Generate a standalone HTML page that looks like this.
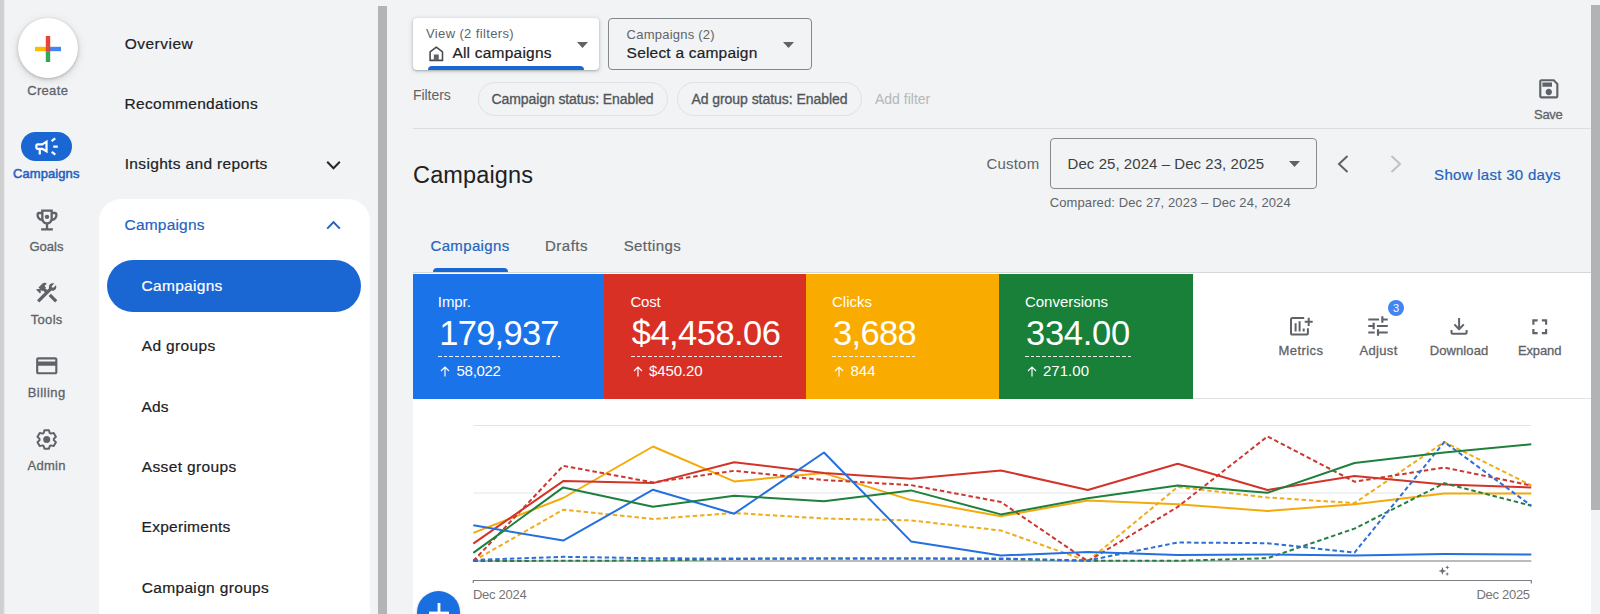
<!DOCTYPE html>
<html lang="en"><head><meta charset="utf-8"><title>Campaigns</title>
<style>
*{box-sizing:border-box}
html,body{margin:0;padding:0}
body{width:1600px;height:614px;overflow:hidden;position:relative;background:#f1f3f4;font-family:"Liberation Sans",sans-serif;color:#202124}
.t{position:absolute;white-space:pre;line-height:20px;height:20px}
.a{position:absolute}
.edge{left:0;top:0;width:6px;height:614px;background:linear-gradient(90deg,#cfd0cf 0,#cfd0cf 3.300px,#e4e6e7 4.300px,#f1f3f4 5.500px)}
.create{left:17.5px;top:18px;width:60px;height:60px;border-radius:50%;background:#fff;box-shadow:0 1px 3px rgba(60,64,67,.3),0 2px 8px rgba(60,64,67,.18)}
.pill{left:20.8px;top:131.500px;width:51.200px;height:29.500px;border-radius:15px;background:#1a66d3}
.navcard{left:99px;top:199px;width:271px;height:440px;border-radius:22px;background:#fff}
.navsel{left:107px;top:259.5px;width:254px;height:52px;border-radius:26px;background:#1a66d3}
.sb1{left:378.200px;top:5.500px;width:8.700px;height:620px;background:#b3b4b6}
.sb2t{left:1591.300px;top:0;width:9px;height:614px;background:#f1f3f4}
.sb2{left:1591.300px;top:5.400px;width:9px;height:504.600px;background:#b2b3b5}
.viewbox{left:412.900px;top:17.700px;width:186.300px;height:52.300px;border-radius:4px;background:#fff;box-shadow:0 1px 2px rgba(60,64,67,.3),0 1px 4px 1px rgba(60,64,67,.15);overflow:hidden}
.viewbar{left:15.5px;bottom:0;width:156px;height:4px;border-radius:4px 4px 0 0;background:#1a66d3}
.campbox{left:608px;top:18px;width:203.500px;height:52px;border-radius:4px;border:1px solid #84888d}
.chip{top:82px;height:34px;border-radius:17px;border:1.400px solid #dfe1e4}
.hr{left:413px;top:128px;width:1178px;height:1px;background:#dcdee1}
.datebox{left:1049.5px;top:138px;width:267.5px;height:51.200px;border-radius:4px;border:1px solid #878b90}
.tabline{left:413px;top:272px;width:1178px;height:1px;background:#d5d7da}
.tabsel{left:432.5px;top:268.300px;width:75px;height:4px;border-radius:4px 4px 0 0;background:#1a66d3}
.panel{left:413px;top:273px;width:1178px;height:345px;background:#fff}
.card{top:273.5px;height:125px}
.panelline{left:1193px;top:398px;width:398px;height:1px;background:#e2e3e5}
.dash{height:1px;top:355.500px;opacity:.9;background:repeating-linear-gradient(90deg,#fff 0 3.600px,transparent 3.600px 5.700px)}
.fab{left:417.300px;top:591px;width:43px;height:43px;border-radius:50%;background:#1a6fe0;box-shadow:0 1px 3px rgba(60,64,67,.35)}
.badge{left:1387.900px;top:299.800px;width:16.400px;height:16.400px;border-radius:50%;background:#4285f4}
svg{position:absolute;overflow:visible}

</style></head>
<body>
<div class="a edge"></div>
<div class="a create"></div>
<svg style="left:34.5px;top:35.5px" width="26" height="26" viewBox="0 0 26 26">
<rect x="10.8" y="0" width="4.4" height="13" fill="#ea4335"/>
<rect x="10.8" y="13" width="4.4" height="13" fill="#34a853"/>
<rect x="0" y="10.8" width="13" height="4.4" fill="#fbbc04"/>
<rect x="13" y="10.8" width="13" height="4.4" fill="#4285f4"/>
<rect x="10.8" y="10.8" width="4.4" height="4.4" fill="#ea4335"/>
</svg>
<div class="a pill"></div>
<svg style="left:33.4px;top:132.7px" width="27" height="27" viewBox="0 0 24 24" fill="#fff"><path d="M18 11v2h4v-2h-4zm-2 6.61c.96.71 2.21 1.65 3.2 2.39.4-.53.8-1.07 1.2-1.6-.99-.74-2.24-1.68-3.2-2.4-.4.54-.8 1.08-1.2 1.61zM20.4 5.6c-.4-.53-.8-1.07-1.2-1.6-.99.74-2.24 1.68-3.2 2.4.4.53.8 1.07 1.2 1.6.96-.72 2.21-1.65 3.2-2.4zM4 9c-1.1 0-2 .9-2 2v2c0 1.1.9 2 2 2h1v4h2v-4h1l5 3V6L8 9H4zm5.03 1.71L11 9.53v4.94l-1.97-1.18-.48-.29H4v-2h4.55l.48-.29z"/></svg>
<!-- goals -->
<svg style="left:33px;top:206.2px" width="28" height="28" viewBox="0 0 24 24" fill="#5f6368"><path d="M19 5h-2V3H7v2H5c-1.1 0-2 .9-2 2v1c0 2.55 1.92 4.63 4.39 4.940.63 1.5 1.98 2.63 3.61 2.96V19H7v2h10v-2h-4v-3.1c1.63-.33 2.98-1.46 3.61-2.96C19.08 12.63 21 10.55 21 8V7c0-1.1-.9-2-2-2zM5 8V7h2v3.82C5.84 10.4 5 9.3 5 8zm7 6c-1.65 0-3-1.35-3-3V5h6v6c0 1.65-1.35 3-3 3zm7-6c0 1.3-.84 2.4-2 2.82V7h2v1z"/><circle cx="12" cy="9.3" r="1.9"/></svg>
<!-- tools -->
<svg style="left:34.050px;top:280.250px" width="25.500" height="25.500" viewBox="0 0 24 24" fill="#5f6368"><path d="M13.78 15.17l2.12-2.12 6 6-2.12 2.120zM17.5 10c1.93 0 3.5-1.57 3.5-3.5 0-.58-.16-1.12-.41-1.6l-2.7 2.7-1.49-1.49 2.7-2.7c-.48-.25-1.02-.41-1.6-.41C15.57 3 14 4.57 14 6.5c0 .41.08.8.21 1.160l-1.85 1.85-1.78-1.78.71-.71-1.410-1.410L12 3.490c-1.170-1.170-3.070-1.170-4.240 0L4.220 7.030l1.410 1.410H2.810l-.71.71 3.540 3.540.71-.71V9.150l1.410 1.410.71-.71 1.780 1.780-7.410 7.410 2.120 2.120L16.340 9.790c.360.130.750.210 1.160.210z"/></svg>
<!-- billing -->
<svg style="left:33.850px;top:353.450px" width="25.500" height="25.500" viewBox="0 0 24 24" fill="#5f6368"><path d="M20 4H4c-1.110 0-1.990.89-1.990 2L2 18c0 1.110.89 2 2 2h16c1.110 0 2-.89 2-2V6c0-1.110-.89-2-2-2zm0 14H4v-6h16v6zm0-10H4V6h16v2z"/></svg>
<!-- admin -->
<svg style="left:0;top:0" width="100" height="614" viewBox="0 0 100 614"><path d="M49.74 432.97 L48.94 430.17 L44.46 430.17 L43.66 432.97 L42.57 433.60 L39.74 432.89 L37.50 436.77 L39.53 438.87 L39.53 440.13 L37.50 442.23 L39.74 446.11 L42.57 445.40 L43.66 446.03 L44.46 448.83 L48.94 448.83 L49.74 446.03 L50.83 445.40 L53.66 446.11 L55.90 442.23 L53.87 440.13 L53.87 438.87 L55.90 436.77 L53.66 432.89 L50.83 433.60 Z" fill="none" stroke="#5f6368" stroke-width="2" stroke-linejoin="round"/><circle cx="46.7" cy="439.5" r="3.500" fill="#5f6368"/></svg>
<!-- nav -->
<div class="a navcard"></div>
<div class="a navsel"></div>
<svg style="left:325.700px;top:157.700px" width="15" height="15" viewBox="0 0 15 15" fill="none" stroke="#26282b" stroke-width="2"><path d="M1.2 3.8 L7.5 10.3 L13.8 3.8"/></svg>
<svg style="left:325.700px;top:217.700px" width="15" height="15" viewBox="0 0 15 15" fill="none" stroke="#2560bd" stroke-width="2"><path d="M1.200 10.6 L7.5 4.1 L13.800 10.6"/></svg>
<div class="a sb1"></div>
<!-- top -->
<div class="a viewbox"><div class="a viewbar"></div></div>
<svg style="left:429.200px;top:45.600px" width="14.600" height="15.300" viewBox="0 0 16 15.5" preserveAspectRatio="none" fill="none" stroke="#45494d" stroke-width="1.700" stroke-linejoin="round"><path d="M1.2 14.600 V6 L8 1.100 L14.800 6 V14.600 Z"/><rect x="5.300" y="8.600" width="5.400" height="6" fill="#5f6368" stroke="none"/></svg>
<svg style="left:577px;top:41.500px" width="11" height="6" viewBox="0 0 11 6"><path d="M0 0 H11 L5.500 6 Z" fill="#5f6368"/></svg>
<div class="a campbox"></div>
<svg style="left:783px;top:42px" width="11" height="6" viewBox="0 0 11 6"><path d="M0 0 H11 L5.500 6 Z" fill="#5f6368"/></svg>
<div class="a chip" style="left:478px;width:190px"></div>
<div class="a chip" style="left:677px;width:184.500px"></div>
<div class="a hr"></div>
<svg style="left:1535.600px;top:75.600px" width="25.600" height="25.600" viewBox="0 0 24 24" fill="#5f6368"><path d="M17 3H5c-1.110 0-2 .9-2 2v14c0 1.100.89 2 2 2h14c1.100 0 2-.9 2-2V7l-4-4zm2 16H5V5h11.170L19 7.830V19zm-7-7c-1.660 0-3 1.340-3 3s1.340 3 3 3 3-1.340 3-3-1.340-3-3-3zM6 6h9v4H6z"/></svg>
<div class="a datebox"></div>
<svg style="left:1289px;top:161.200px" width="11" height="6" viewBox="0 0 11 6"><path d="M0 0 H11 L5.500 6 Z" fill="#5f6368"/></svg>
<svg style="left:1337px;top:155px" width="12" height="18" viewBox="0 0 12 18" fill="none" stroke="#5f6368" stroke-width="2"><path d="M10.500 1 L2 9 L10.500 17"/></svg>
<svg style="left:1389.500px;top:155px" width="12" height="18" viewBox="0 0 12 18" fill="none" stroke="#bfc2c6" stroke-width="2"><path d="M1.500 1 L10 9 L1.500 17"/></svg>
<!-- tabs -->
<div class="a tabline"></div>
<div class="a tabsel"></div>
<div class="a panel"></div>
<div class="a card" style="left:413px;width:191.500px;background:#1a73e8"></div>
<div class="a card" style="left:604.400px;width:201.600px;background:#d93025"></div>
<div class="a card" style="left:806px;width:193.200px;background:#f9ab00"></div>
<div class="a card" style="left:999.200px;width:194px;background:#188038"></div>
<div class="a panelline"></div>
<div class="a dash" style="left:437.500px;width:122.500px"></div>
<div class="a dash" style="left:630.500px;width:151.500px"></div>
<div class="a dash" style="left:832px;width:85px"></div>
<div class="a dash" style="left:1025px;width:106px"></div>
<svg style="left:440px;top:365.800px" width="10" height="11" viewBox="0 0 10 11" fill="none" stroke="#fff" stroke-width="1.200"><path d="M5 10.500 V1.200 M1 5 L5 1 L9 5"/></svg>
<svg style="left:632.5px;top:365.800px" width="10" height="11" viewBox="0 0 10 11" fill="none" stroke="#fff" stroke-width="1.200"><path d="M5 10.500 V1.200 M1 5 L5 1 L9 5"/></svg>
<svg style="left:834px;top:365.800px" width="10" height="11" viewBox="0 0 10 11" fill="none" stroke="#fff" stroke-width="1.200"><path d="M5 10.500 V1.200 M1 5 L5 1 L9 5"/></svg>
<svg style="left:1027px;top:365.800px" width="10" height="11" viewBox="0 0 10 11" fill="none" stroke="#fff" stroke-width="1.200"><path d="M5 10.500 V1.200 M1 5 L5 1 L9 5"/></svg>
<!-- toolbar -->
<svg style="left:1286px;top:313px" width="30" height="26" viewBox="1286 313 30 26" fill="none" stroke="#5f6368" stroke-width="2"><path d="M1304.200 318 H1292.500 Q1291 318 1291 319.500 V333 Q1291 334.600 1292.500 334.600 H1306.300 Q1307.900 334.600 1307.900 333 V328.300"/><path d="M1295.600 323.200 V331.400 M1299.600 321.200 V331.400 M1303.700 328.400 V331.400"/><path d="M1304.700 321.800 H1312.700 M1308.700 317.700 V325.900"/></svg>
<svg style="left:1365.300px;top:313.300px" width="26" height="26" viewBox="0 0 24 24" fill="#5f6368"><path d="M3 17v2h6v-2H3zM3 5v2h10V5H3zm10 16v-2h8v-2h-8v-2h-2v6h2zM7 9v2H3v2h4v2h2V9H7zm14 4v-2H11v2h10zm-6-4h2V7h4V5h-4V3h-2v6z"/></svg>
<div class="a badge"></div>
<svg style="left:1449px;top:316px" width="20" height="20" viewBox="0 0 20 20" fill="none" stroke="#5f6368" stroke-width="2" stroke-linejoin="round"><path d="M10.100 2 V12.800 M5.400 8.400 L10.100 13.200 L14.800 8.400 M2.500 14 V16.700 Q2.500 17.700 3.500 17.700 H16.600 Q17.600 17.700 17.600 16.700 V14"/></svg>
<svg style="left:1526.550px;top:313.650px" width="25.500" height="25.500" viewBox="0 0 24 24" fill="#5f6368"><path d="M7 14H5v5h5v-2H7v-3zm-2-4h2V7h3V5H5v5zm12 7h-3v2h5v-5h-2v3zM14 5v2h3v3h2V5h-5z"/></svg>
<svg style="left:0;top:0" width="1600" height="614" viewBox="0 0 1600 614" fill="none">
<path d="M473.3 425.5 H1531.3 M473.3 493 H1531.3" stroke="#e3e4e6" stroke-width="1"/>
<path d="M473.3 561 H1531.3" stroke="#a3a5a8" stroke-width="1.400"/>
<path d="M473.3 583 V580.5 H1531.3 V583.5" stroke="#7c7f83" stroke-width="1.200"/>
<polyline points="473.3,561.0 563.2,509.7 653.0,519.0 734.2,513.0 824.0,518.5 911.0,520.4 1000.9,530.5 1087.8,561.2 1177.7,487.0 1267.5,497.5 1354.5,503.1 1444.3,442.0 1531.3,485.5" stroke="#efad1c" stroke-width="2" stroke-linejoin="round" stroke-dasharray="4.500 2.800"/>
<polyline points="473.3,532.9 563.2,498.0 653.0,446.5 734.2,481.4 824.0,473.1 911.0,500.1 1000.9,516.2 1087.8,500.5 1177.7,504.2 1267.5,511.0 1354.5,504.2 1444.3,493.6 1531.3,493.6" stroke="#f4aa0c" stroke-width="2" stroke-linejoin="round"/>
<polyline points="473.3,561.0 563.2,465.8 653.0,482.4 734.2,470.8 824.0,480.0 911.0,485.1 1000.9,502.0 1087.8,561.2 1177.7,506.9 1267.5,436.4 1354.5,481.7 1444.3,467.5 1531.3,485.5" stroke="#cc382f" stroke-width="2" stroke-linejoin="round" stroke-dasharray="4.500 2.800"/>
<polyline points="473.3,543.6 563.2,481.1 653.0,483.1 734.2,462.2 824.0,473.1 911.0,478.7 1000.9,470.5 1087.8,490.0 1177.7,463.7 1267.5,490.0 1354.5,476.1 1444.3,484.4 1531.3,487.4" stroke="#d2342a" stroke-width="2" stroke-linejoin="round"/>
<polyline points="473.3,561.0 563.2,560.8 653.0,560.5 734.2,559.0 824.0,558.5 911.0,558.5 1000.9,559.0 1087.8,560.8 1177.7,560.8 1267.5,558.2 1354.5,528.6 1444.3,483.2 1531.3,505.7" stroke="#267f42" stroke-width="2" stroke-linejoin="round" stroke-dasharray="4.500 2.800"/>
<polyline points="473.3,560.0 563.2,556.8 653.0,558.3 734.2,558.5 824.0,558.5 911.0,558.5 1000.9,558.5 1087.8,560.5 1177.7,542.5 1267.5,543.2 1354.5,552.6 1444.3,442.0 1531.3,505.7" stroke="#2d6fd6" stroke-width="2" stroke-linejoin="round" stroke-dasharray="4.500 2.800"/>
<polyline points="473.3,525.3 563.2,540.6 653.0,489.7 734.2,513.7 824.0,452.5 911.0,541.4 1000.9,555.6 1087.8,551.9 1177.7,554.9 1267.5,554.5 1354.5,555.6 1444.3,554.1 1531.3,554.5" stroke="#2470e0" stroke-width="2" stroke-linejoin="round"/>
<polyline points="473.3,552.9 563.2,487.4 653.0,506.7 734.2,495.7 824.0,501.2 911.0,490.4 1000.9,514.4 1087.8,498.2 1177.7,485.5 1267.5,492.8 1354.5,463.0 1444.3,452.5 1531.3,444.2" stroke="#1e803c" stroke-width="2" stroke-linejoin="round"/>
<path d="M1442.4 567.1 L1443.49 569.91 L1446.3000000000002 571 L1443.49 572.09 L1442.4 574.9 L1441.31 572.09 L1438.5 571 L1441.31 569.91 Z M1447.3 565.3 L1447.89 566.81 L1449.3999999999999 567.4 L1447.89 567.99 L1447.3 569.5 L1446.71 567.99 L1445.2 567.4 L1446.71 566.81 Z M1447.2 571.9 L1447.79 573.41 L1449.3 574 L1447.79 574.59 L1447.2 576.1 L1446.61 574.59 L1445.1000000000001 574 L1446.61 573.41 Z" fill="#6b6f74"/>
</svg>
<div class="a fab"></div>
<svg style="left:428.500px;top:602.500px" width="20" height="20" viewBox="0 0 20 20" fill="#fff"><rect x="8.600" y="0" width="2.800" height="20"/><rect x="0" y="8.600" width="20" height="2.800"/></svg>
<div class="a sb2t"></div>
<div class="a sb2"></div>

<div class="t" style="left:27.2px;top:80.5px;font-size:13px;color:#5f6368;letter-spacing:0.33px;-webkit-text-stroke:0.3px #5f6368">Create</div>
<div class="t" style="left:13.0px;top:163.5px;font-size:13px;color:#2360c0;letter-spacing:0.08px;-webkit-text-stroke:0.5px #2360c0">Campaigns</div>
<div class="t" style="left:29.5px;top:236.5px;font-size:13px;color:#5f6368;letter-spacing:0.01px;-webkit-text-stroke:0.3px #5f6368">Goals</div>
<div class="t" style="left:30.7px;top:309.5px;font-size:13px;color:#5f6368;letter-spacing:0.33px;-webkit-text-stroke:0.3px #5f6368">Tools</div>
<div class="t" style="left:27.7px;top:382.5px;font-size:13px;color:#5f6368;letter-spacing:0.47px;-webkit-text-stroke:0.3px #5f6368">Billing</div>
<div class="t" style="left:27.6px;top:455.5px;font-size:13px;color:#5f6368;letter-spacing:0.23px;-webkit-text-stroke:0.3px #5f6368">Admin</div>
<div class="t" style="left:124.7px;top:34.1px;font-size:15.5px;color:#202124;letter-spacing:0.50px;-webkit-text-stroke:0.2px #202124">Overview</div>
<div class="t" style="left:124.6px;top:94.1px;font-size:15.5px;color:#202124;letter-spacing:0.28px;-webkit-text-stroke:0.2px #202124">Recommendations</div>
<div class="t" style="left:124.7px;top:154.2px;font-size:15.5px;color:#202124;letter-spacing:0.34px;-webkit-text-stroke:0.2px #202124">Insights and reports</div>
<div class="t" style="left:124.6px;top:215.1px;font-size:15.5px;color:#2563c0;letter-spacing:0.18px;-webkit-text-stroke:0.2px #2563c0">Campaigns</div>
<div class="t" style="left:141.6px;top:276.1px;font-size:15.5px;color:#ffffff;letter-spacing:0.29px;-webkit-text-stroke:0.2px #ffffff">Campaigns</div>
<div class="t" style="left:141.7px;top:336.4px;font-size:15.5px;color:#202124;letter-spacing:0.37px;-webkit-text-stroke:0.2px #202124">Ad groups</div>
<div class="t" style="left:141.5px;top:396.7px;font-size:15.5px;color:#202124;letter-spacing:0.09px;-webkit-text-stroke:0.2px #202124">Ads</div>
<div class="t" style="left:141.7px;top:457.0px;font-size:15.5px;color:#202124;letter-spacing:0.38px;-webkit-text-stroke:0.2px #202124">Asset groups</div>
<div class="t" style="left:141.6px;top:517.3px;font-size:15.5px;color:#202124;letter-spacing:0.26px;-webkit-text-stroke:0.2px #202124">Experiments</div>
<div class="t" style="left:141.7px;top:577.6px;font-size:15.5px;color:#202124;letter-spacing:0.34px;-webkit-text-stroke:0.2px #202124">Campaign groups</div>
<div class="t" style="left:426.0px;top:24.0px;font-size:13px;color:#5f6368;letter-spacing:0.37px">View (2 filters)</div>
<div class="t" style="left:452.4px;top:42.9px;font-size:15.5px;color:#202124;letter-spacing:0.22px;-webkit-text-stroke:0.2px #202124">All campaigns</div>
<div class="t" style="left:626.6px;top:24.8px;font-size:13px;color:#5f6368;letter-spacing:0.23px">Campaigns (2)</div>
<div class="t" style="left:626.6px;top:43.1px;font-size:15.5px;color:#202124;letter-spacing:0.20px;-webkit-text-stroke:0.2px #202124">Select a campaign</div>
<div class="t" style="left:413.0px;top:85.1px;font-size:14px;color:#5f6368;letter-spacing:-0.06px">Filters</div>
<div class="t" style="left:491.5px;top:88.8px;font-size:14px;color:#52565b;letter-spacing:-0.09px;-webkit-text-stroke:0.33px #52565b">Campaign status: Enabled</div>
<div class="t" style="left:691.4px;top:88.8px;font-size:14px;color:#52565b;letter-spacing:-0.05px;-webkit-text-stroke:0.33px #52565b">Ad group status: Enabled</div>
<div class="t" style="left:875.0px;top:88.8px;font-size:14px;color:#b4b7bb;letter-spacing:0.00px">Add filter</div>
<div class="t" style="left:1534.0px;top:104.7px;font-size:13px;color:#5f6368;letter-spacing:-0.29px;-webkit-text-stroke:0.3px #5f6368">Save</div>
<div class="t" style="left:413.1px;top:164.9px;font-size:23.5px;color:#202124;letter-spacing:0.12px">Campaigns</div>
<div class="t" style="left:986.4px;top:153.8px;font-size:15px;color:#5f6368;letter-spacing:0.22px">Custom</div>
<div class="t" style="left:1067.6px;top:153.8px;font-size:15px;color:#3c4043;letter-spacing:0.05px">Dec 25, 2024 – Dec 23, 2025</div>
<div class="t" style="left:1049.7px;top:192.7px;font-size:13px;color:#5f6368;letter-spacing:0.11px">Compared: Dec 27, 2023 – Dec 24, 2024</div>
<div class="t" style="left:1434.1px;top:165.0px;font-size:15px;color:#2563c0;letter-spacing:0.29px;-webkit-text-stroke:0.2px #2563c0">Show last 30 days</div>
<div class="t" style="left:430.5px;top:236.4px;font-size:15px;color:#2563c0;letter-spacing:0.35px;-webkit-text-stroke:0.2px #2563c0">Campaigns</div>
<div class="t" style="left:545.0px;top:236.4px;font-size:15px;color:#5f6368;letter-spacing:0.50px;-webkit-text-stroke:0.2px #5f6368">Drafts</div>
<div class="t" style="left:623.7px;top:236.4px;font-size:15px;color:#5f6368;letter-spacing:0.41px;-webkit-text-stroke:0.2px #5f6368">Settings</div>
<div class="t" style="left:437.8px;top:291.6px;font-size:15px;color:#ffffff;letter-spacing:-0.07px">Impr.</div>
<div class="t" style="left:439.3px;top:323.3px;font-size:34.5px;color:#ffffff;letter-spacing:-0.75px">179,937</div>
<div class="t" style="left:456.6px;top:360.8px;font-size:15px;color:#ffffff;letter-spacing:-0.32px">58,022</div>
<div class="t" style="left:630.5px;top:291.6px;font-size:15px;color:#ffffff;letter-spacing:-0.21px">Cost</div>
<div class="t" style="left:631.8px;top:323.3px;font-size:34.5px;color:#ffffff;letter-spacing:-0.55px">$4,458.06</div>
<div class="t" style="left:648.9px;top:360.8px;font-size:15px;color:#ffffff;letter-spacing:-0.08px">$450.20</div>
<div class="t" style="left:832.0px;top:291.6px;font-size:15px;color:#ffffff;letter-spacing:0.00px">Clicks</div>
<div class="t" style="left:833.0px;top:323.3px;font-size:34.5px;color:#ffffff;letter-spacing:-0.67px">3,688</div>
<div class="t" style="left:850.5px;top:360.8px;font-size:15px;color:#ffffff;letter-spacing:-0.01px">844</div>
<div class="t" style="left:1025.0px;top:291.6px;font-size:15px;color:#ffffff;letter-spacing:-0.03px">Conversions</div>
<div class="t" style="left:1026.0px;top:323.3px;font-size:34.5px;color:#ffffff;letter-spacing:-0.26px">334.00</div>
<div class="t" style="left:1043.0px;top:360.8px;font-size:15px;color:#ffffff;letter-spacing:0.02px">271.00</div>
<div class="t" style="left:1278.5px;top:341.0px;font-size:13px;color:#5f6368;letter-spacing:0.44px;-webkit-text-stroke:0.3px #5f6368">Metrics</div>
<div class="t" style="left:1359.6px;top:341.0px;font-size:13px;color:#5f6368;letter-spacing:0.31px;-webkit-text-stroke:0.3px #5f6368">Adjust</div>
<div class="t" style="left:1429.8px;top:341.0px;font-size:13px;color:#5f6368;letter-spacing:0.08px;-webkit-text-stroke:0.3px #5f6368">Download</div>
<div class="t" style="left:1517.9px;top:341.0px;font-size:13px;color:#5f6368;letter-spacing:-0.12px;-webkit-text-stroke:0.3px #5f6368">Expand</div>
<div class="t" style="left:1393.1px;top:298.2px;font-size:11px;color:#ffffff;letter-spacing:-0.12px">3</div>
<div class="t" style="left:473.0px;top:584.8px;font-size:13px;color:#757575;letter-spacing:-0.28px">Dec 2024</div>
<div class="t" style="left:1476.4px;top:584.8px;font-size:13px;color:#757575;letter-spacing:-0.28px">Dec 2025</div>
</body></html>
